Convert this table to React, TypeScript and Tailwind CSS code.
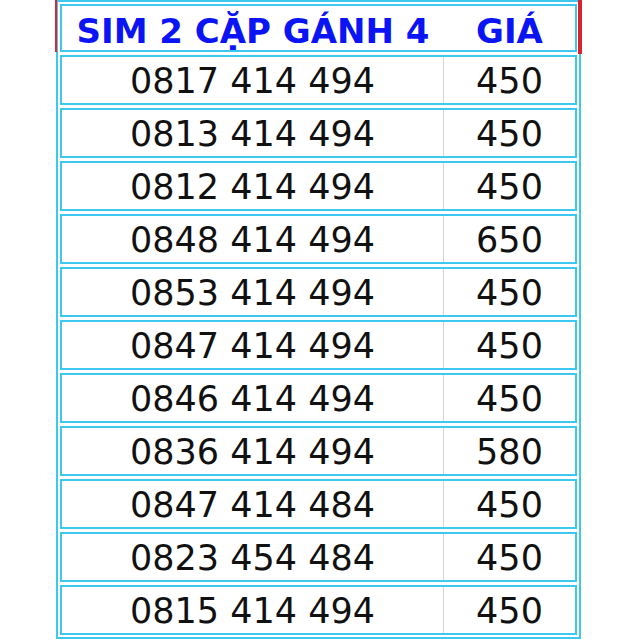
const rows = [
  ['0817 414 494', '450'],
  ['0813 414 494', '450'],
  ['0812 414 494', '450'],
  ['0848 414 494', '650'],
  ['0853 414 494', '450'],
  ['0847 414 494', '450'],
  ['0846 414 494', '450'],
  ['0836 414 494', '580'],
  ['0847 414 484', '450'],
  ['0823 454 484', '450'],
  ['0815 414 494', '450'],
]

export default function App() {
  return (
    <div className="w-[640px] h-[640px] bg-white overflow-hidden" style={{ fontFamily: '"DejaVu Sans", Verdana, sans-serif' }}>
      <div className="relative ml-[56px] w-[525px] border-2 border-[#3cc8ef] p-[2px] flex flex-col gap-[3px]">
        {/* red marks beside the header */}
        <div className="absolute left-[-3px] top-[-2px] h-[52px] w-[2px] bg-[#e3222e]" />
        <div className="absolute right-[-3px] top-[-2px] h-[54px] w-[4px] bg-[#d8242f]" />

        {/* Header */}
        <div className="flex h-[48px] border-2 border-[#3cc8ef] text-[34px] font-bold text-[#0a14f5] leading-none">
          <div className="w-[382px] flex items-center justify-center pt-[6px]">SIM 2 CẶP GÁNH 4</div>
          <div className="flex-1 flex items-center justify-center pt-[6px]">GIÁ</div>
        </div>

        {rows.map(([num, price], i) => (
          <div key={i} className="flex h-[50px] border-2 border-[#3cc8ef] text-[35px] text-[#111] leading-none">
            <div className="w-[382px] flex items-center justify-center border-r border-[#d4d4d4] pt-[3px]">{num}</div>
            <div className="flex-1 flex items-center justify-center pt-[3px]">{price}</div>
          </div>
        ))}
      </div>
    </div>
  )
}
